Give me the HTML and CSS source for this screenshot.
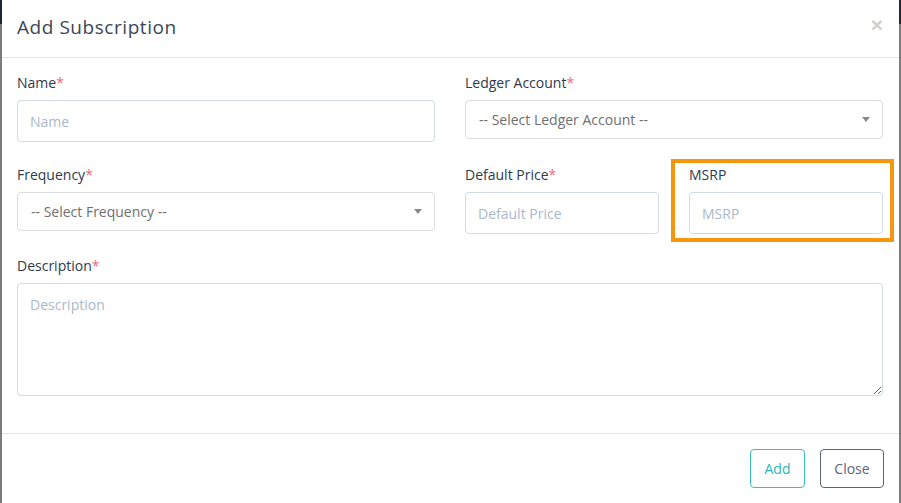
FILE: index.html
```html
<!DOCTYPE html>
<html>
<head>
<meta charset="utf-8">
<link rel="stylesheet" href="styles.css">
</head>
<body>
<div class="modal">
  <div class="modal-header">
    <h4 class="modal-title">Add Subscription</h4>
    <button class="close" type="button">&times;</button>
  </div>
  <div class="modal-body">
    <div class="grid">
      <div class="group first">
        <label class="label">Name<span class="req">*</span></label>
        <input class="input" type="text" placeholder="Name">
      </div>
      <div class="group first">
        <label class="label">Ledger Account<span class="req">*</span></label>
        <div class="select-wrap">
          <select class="select"><option>-- Select Ledger Account --</option></select>
          <svg class="caret" width="8" height="5" viewBox="0 0 8 5"><path d="M0 0h8L4 5z" fill="#888"/></svg>
        </div>
      </div>
      <div class="group">
        <label class="label">Frequency<span class="req">*</span></label>
        <div class="select-wrap">
          <select class="select"><option>-- Select Frequency --</option></select>
          <svg class="caret" width="8" height="5" viewBox="0 0 8 5"><path d="M0 0h8L4 5z" fill="#888"/></svg>
        </div>
      </div>
      <div class="subgrid">
        <div class="group">
          <label class="label">Default Price<span class="req">*</span></label>
          <input class="input" type="text" placeholder="Default Price">
        </div>
        <div class="group highlight">
          <label class="label">MSRP</label>
          <input class="input" type="text" placeholder="MSRP">
          <div class="marker"></div>
        </div>
      </div>
      <div class="group full">
        <label class="label">Description<span class="req">*</span></label>
        <textarea class="textarea" placeholder="Description"></textarea>
      </div>
    </div>
  </div>
  <div class="modal-footer">
    <button class="btn btn-add" type="button">Add</button>
    <button class="btn btn-close" type="button">Close</button>
  </div>
</div>
</body>
</html>
```
FILE: styles.css
```css
* { box-sizing: border-box; }
html, body { margin: 0; height: 100%; }
body {
  background: linear-gradient(to bottom, #1d2635 0, #1d2635 24px, #7b7b7b 24px, #7b7b7b 100%);
  font-family: "Open Sans", "Liberation Sans", sans-serif;
  padding: 0 2px;
  overflow: hidden;
}
.modal {
  background: #fff;
  height: 503px;
  display: flex;
  flex-direction: column;
}
.modal-header {
  flex-shrink: 0;
  height: 58px;
  border-bottom: 1px solid #e5e5e5;
  display: flex;
  align-items: center;
  justify-content: space-between;
  padding: 0 16px 0 15px;
}
.modal-title {
  margin: 0;
  font-family: "Open Sans", sans-serif;
  font-weight: 400;
  font-size: 19px;
  letter-spacing: 0.55px;
  color: #3b4656;
  padding-bottom: 3px;
}
.close {
  border: 0;
  background: none;
  padding: 0;
  font-size: 21px;
  font-weight: 700;
  color: #cfcfcf;
  line-height: 1;
  margin-top: -9px;
  font-family: "Liberation Sans", sans-serif;
}
.modal-body {
  padding: 15px 16px 15px 15px;
  flex: 1;
  min-height: 0;
}
.grid {
  display: grid;
  grid-template-columns: 1fr 1fr;
  column-gap: 30px;
}
.subgrid {
  display: grid;
  grid-template-columns: 1fr 1fr;
  column-gap: 30px;
}
.full { grid-column: 1 / span 2; }
.group {
  margin-bottom: 22px;
  display: flex;
  flex-direction: column;
  position: relative;
}
.group.first { margin-bottom: 23px; }
.label {
  font-size: 14px;
  line-height: 20px;
  height: 20px;
  color: #2e3a4d;
  margin-bottom: 7px;
}
.req { color: #f2677a; }
.input {
  height: 42px;
  border: 1px solid #d3dae6;
  border-radius: 4px;
  padding: 0 12px;
  font-family: "Open Sans", sans-serif;
  font-size: 14px;
  color: #333;
  outline: none;
  width: 100%;
}
.input::placeholder, .textarea::placeholder { color: #aab8cd; }
.select-wrap { position: relative; }
.select {
  appearance: none;
  -webkit-appearance: none;
  width: 100%;
  height: 39px;
  border: 1px solid #dcdcdc;
  border-radius: 4px;
  background: #fff;
  padding: 0 13px;
  font-family: "Open Sans", sans-serif;
  font-size: 14px;
  color: #6f6f6f;
  outline: none;
}
.caret {
  position: absolute;
  right: 13px;
  top: 17px;
}
.textarea {
  height: 113px;
  border: 1px solid #d3dae6;
  border-radius: 4px;
  padding: 11px 12px;
  font-family: "Open Sans", sans-serif;
  font-size: 14px;
  resize: vertical;
  outline: none;
  width: 100%;
}
.marker {
  position: absolute;
  left: -18px;
  top: -6px;
  right: -11px;
  bottom: -8px;
  border: 4px solid #f5960e;
  pointer-events: none;
}
.modal-footer {
  flex-shrink: 0;
  border-top: 1px solid #e5e5e5;
  padding: 15px 15px 15px 15px;
  display: flex;
  justify-content: flex-end;
  gap: 15px;
}
.btn {
  height: 39px;
  border-radius: 4px;
  background: #fff;
  font-family: "Open Sans", sans-serif;
  font-size: 14px;
  padding: 0 14px;
  cursor: pointer;
}
.btn-add {
  border: 1px solid #3bbec3;
  color: #2fb4ba;
  width: 55px;
  padding: 0;
}
.btn-close {
  border: 1px solid #5a6478;
  color: #5a6478;
  width: 64px;
  padding: 0;
}
```
